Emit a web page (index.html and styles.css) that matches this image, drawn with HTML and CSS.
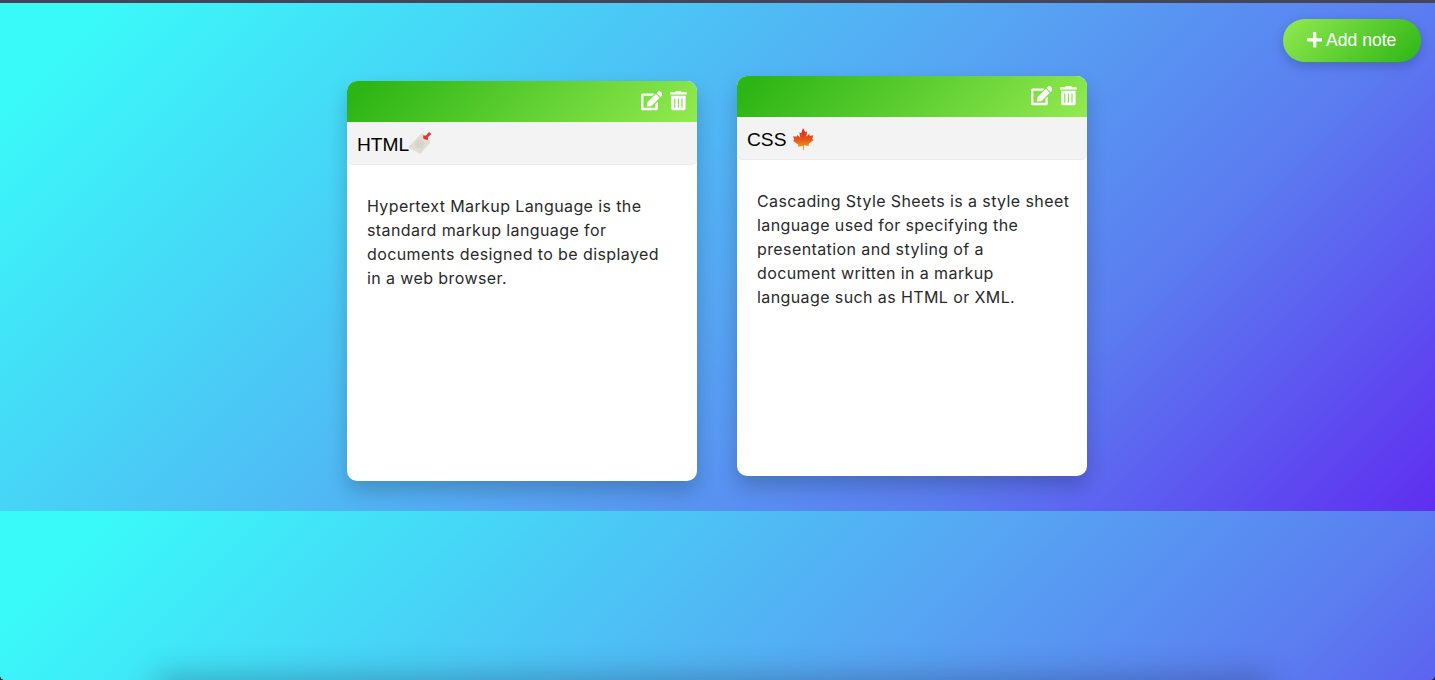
FILE: index.html
```html
<!DOCTYPE html>
<html lang="en">
<head>
<meta charset="utf-8">
<title>Notes</title>
<link rel="stylesheet" href="styles.css">
</head>
<body>
<div class="window-top"></div>
<header class="toolbar">
  <button class="add-btn" type="button">
    <svg class="icon-plus" viewBox="0 0 448 512"><path d="M416 208H272V64c0-17.67-14.33-32-32-32h-32c-17.67 0-32 14.33-32 32v144H32c-17.67 0-32 14.33-32 32v32c0 17.67 14.33 32 32 32h144v144c0 17.67 14.33 32 32 32h32c17.67 0 32-14.33 32-32V304h144c17.67 0 32-14.33 32-32v-32c0-17.67-14.33-32-32-32z"/></svg>
    <span>Add note</span>
  </button>
</header>
<main class="notes">
  <article class="note note-low">
    <div class="note-tools">
      <svg class="icon-edit" viewBox="0 0 576 512"><path d="M402.6 83.2l90.2 90.2c3.8 3.8 3.8 10 0 13.8L274.4 405.6l-92.8 10.3c-12.4 1.4-22.9-9.1-21.5-21.5l10.3-92.8L388.8 83.2c3.8-3.8 10-3.8 13.8 0zm162-22.9l-48.8-48.8c-15.2-15.2-39.9-15.2-55.2 0l-35.4 35.4c-3.8 3.8-3.8 10 0 13.8l90.2 90.2c3.8 3.8 10 3.8 13.8 0l35.4-35.4c15.2-15.3 15.2-40 0-55.2zM384 346.2V448H64V128h229.8c3.2 0 6.2-1.3 8.5-3.5l40-40c7.6-7.6 2.2-20.5-8.5-20.5H48C21.5 64 0 85.5 0 112v352c0 26.5 21.5 48 48 48h352c26.500 0 48-21.500 48-48V306.2c0-10.700-12.900-16-20.500-8.500l-40 40c-2.200 2.300-3.500 5.300-3.500 8.500z"/></svg>
      <svg class="icon-trash" viewBox="0 0 448 512"><path d="M32 464a48 48 0 0 0 48 48h288a48 48 0 0 0 48-48V128H32zm272-256a16 16 0 0 1 32 0v224a16 16 0 0 1-32 0zm-96 0a16 16 0 0 1 32 0v224a16 16 0 0 1-32 0zm-96 0a16 16 0 0 1 32 0v224a16 16 0 0 1-32 0zM432 32H312l-9.400-18.700A24 24 0 0 0 281.100 0H166.800a23.720 23.720 0 0 0-21.400 13.300L136 32H16A16 16 0 0 0 0 48v32a16 16 0 0 0 16 16h416a16 16 0 0 0 16-16V48a16 16 0 0 0-16-16z"/></svg>
    </div>
    <h2 class="note-title">HTML<svg class="emoji-tag" viewBox="0 0 24 24" role="img" aria-label="label"><path d="M1 15 13 3a1.500 1.500 0 0 1 2.100 0L22 10a1.500 1.500 0 0 1 0 2.100L13 22a1.500 1.500 0 0 1-2.100 0L1 17a1.500 1.500 0 0 1 0-2z" fill="#e2ddd4"/><circle cx="11.500" cy="13" r="4.500" fill="#d9d3c9"/><path d="M15.500 8 15 4.500 18 4.500 21 1 23.500 3 20 6 20 9z" fill="#ee2f3c"/></svg></h2>
    <p class="note-body">Hypertext Markup Language is the<br>standard markup language for<br>documents designed to be displayed<br>in a web browser.</p>
  </article>
  <article class="note">
    <div class="note-tools">
      <svg class="icon-edit" viewBox="0 0 576 512"><path d="M402.6 83.2l90.2 90.2c3.8 3.8 3.8 10 0 13.8L274.4 405.6l-92.8 10.3c-12.4 1.4-22.9-9.1-21.5-21.5l10.3-92.8L388.8 83.2c3.8-3.8 10-3.8 13.8 0zm162-22.9l-48.8-48.8c-15.2-15.2-39.9-15.2-55.2 0l-35.4 35.4c-3.8 3.8-3.8 10 0 13.8l90.2 90.2c3.8 3.8 10 3.8 13.8 0l35.4-35.4c15.2-15.3 15.2-40 0-55.2zM384 346.2V448H64V128h229.8c3.2 0 6.2-1.3 8.5-3.5l40-40c7.6-7.6 2.2-20.5-8.5-20.5H48C21.5 64 0 85.5 0 112v352c0 26.5 21.5 48 48 48h352c26.500 0 48-21.500 48-48V306.2c0-10.700-12.900-16-20.500-8.500l-40 40c-2.200 2.300-3.500 5.300-3.500 8.500z"/></svg>
      <svg class="icon-trash" viewBox="0 0 448 512"><path d="M32 464a48 48 0 0 0 48 48h288a48 48 0 0 0 48-48V128H32zm272-256a16 16 0 0 1 32 0v224a16 16 0 0 1-32 0zm-96 0a16 16 0 0 1 32 0v224a16 16 0 0 1-32 0zm-96 0a16 16 0 0 1 32 0v224a16 16 0 0 1-32 0zM432 32H312l-9.400-18.700A24 24 0 0 0 281.100 0H166.800a23.720 23.720 0 0 0-21.400 13.300L136 32H16A16 16 0 0 0 0 48v32a16 16 0 0 0 16 16h416a16 16 0 0 0 16-16V48a16 16 0 0 0-16-16z"/></svg>
    </div>
    <h2 class="note-title">CSS <svg class="emoji-leaf" viewBox="0 0 24 24" role="img" aria-label="maple leaf"><defs><linearGradient id="leaf" x1="0" y1="0" x2="0" y2="1"><stop offset="0" stop-color="#d3211a"/><stop offset=".55" stop-color="#e8591a"/><stop offset="1" stop-color="#f3b21f"/></linearGradient></defs><path d="M12 0l2.400 4.600 2-1-.8 6 3-3 .9 2 3.800-.6-1.300 4 1.500 1-5.500 4.400.6 2.100-5.500-.8V24h-1.200v-4.300l-5.500.8.600-2.100L1 14l1.500-1-1.300-4 3.800.6.900-2 3 3-.8-6 2 1z" fill="url(#leaf)"/></svg></h2>
    <p class="note-body">Cascading Style Sheets is a style sheet<br>language used for specifying the<br>presentation and styling of a<br>document written in a markup<br>language such as HTML or XML.</p>
  </article>
</main>
<div class="window-shadow"></div>
</body>
</html>
```
FILE: styles.css
```css
* { box-sizing: border-box; }
html, body { margin: 0; height: 680px; overflow: hidden; }
body {
  position: relative;
  background: linear-gradient(135deg, #3af9f9 6%, #56a6f3 52%, #5b7cf0 74%, #5f2ef0 100%) 0 0 / 100% 511px repeat;
}
body::before,
body::after {
  content: "";
  position: absolute;
  bottom: 0;
  width: 4px;
  height: 4px;
}
body::before {
  left: 0;
  background: radial-gradient(circle at top right, transparent 3.500px, #222 4px);
}
body::after {
  right: 0;
  background: radial-gradient(circle at top left, transparent 3.500px, #222 4px);
}
.window-top { height: 3px; background: #45455a; }
.toolbar {
  display: flex;
  justify-content: flex-end;
  padding: 16px 14px 0 0;
}
.add-btn {
  display: flex;
  align-items: center;
  justify-content: center;
  gap: 4px;
  width: 138px;
  height: 43px;
  padding: 0 1px 1px 0;
  border: 0;
  border-radius: 22px;
  color: #fff;
  font: 17.6px "Liberation Sans", Arial, sans-serif;
  background: linear-gradient(135deg, #93ea50, #2db515);
  box-shadow: 0 4px 12px rgba(0, 0, 0, .2);
}
.icon-plus { width: 15.4px; height: 17.6px; fill: #fff; }
.notes {
  display: flex;
  justify-content: center;
  align-items: flex-start;
  gap: 40px;
  margin-top: 14px;
  padding-right: 1px;
}
.note {
  width: 350px;
  height: 400px;
  border-radius: 10px;
  background: #fff;
  box-shadow: 0 10px 20px rgba(0, 0, 0, .2);
  overflow: hidden;
}
.note-low { margin-top: 5px; }
.note-tools {
  display: flex;
  justify-content: flex-end;
  align-items: center;
  gap: 8px;
  height: 41px;
  padding: 0 10px 1px 0;
  background: linear-gradient(135deg, #2db515 6%, #93ea50 100%);
}
.icon-edit { width: 21.6px; height: 19.2px; fill: #fff; }
.icon-trash { width: 16.8px; height: 19.2px; fill: #fff; }
.note-title {
  display: flex;
  align-items: center;
  height: 43px;
  margin: 0;
  padding: 3px 10px 0;
  border-bottom: 1px solid #ececec;
  border-radius: 0 0 5px 5px;
  background: #f3f3f3;
  color: #000;
  font: 400 19.2px "Liberation Sans", Arial, sans-serif;
  white-space: pre;
}
.emoji-tag { width: 24px; height: 24px; margin: -3px 0 0 -1px; }
.emoji-leaf { width: 22px; height: 22px; margin-top: -2px; }
.note-body {
  margin: 0;
  padding: 29px 20px 0;
  color: #2a2a2a;
  font: 400 16px/24px Inter, sans-serif;
  letter-spacing: .4px;
  white-space: nowrap;
}
.window-shadow {
  position: absolute;
  left: 160px;
  right: 170px;
  bottom: -24px;
  height: 24px;
  box-shadow: 0 0 30px 4px rgba(30, 30, 60, .3);
}
```
